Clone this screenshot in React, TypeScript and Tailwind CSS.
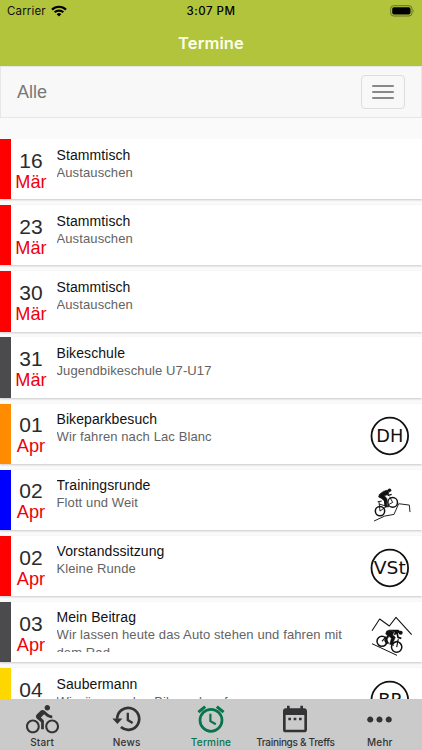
import { MdDirectionsBike, MdDateRange, MdMoreHoriz } from "react-icons/md";
import type { ReactNode } from "react";

function Badge({ text, w }: { text: string; w: number }) {
  return (
    <svg width="40" height="40" viewBox="0 0 40 40">
      <circle cx="19.8" cy="20" r="18.3" fill="none" stroke="#111" strokeWidth="1.8" />
      <text x="19.8" y="26.2" textAnchor="middle" textLength={w} lengthAdjust="spacingAndGlyphs" fontFamily="DejaVu Sans, sans-serif" fontSize="17.5" fill="#111">
        {text}
      </text>
    </svg>
  );
}

function Uphill() {
  return (
    <svg className="overflow-visible" width="40" height="40" viewBox="0 0 40 40" fill="none" stroke="#111" strokeLinejoin="round">
      <g transform="translate(-6 -2.6) scale(.3333)">
        <circle cx="48" cy="95" r="14" strokeWidth="4.5" />
        <circle cx="86" cy="69" r="14.5" strokeWidth="4.5" />
        <path d="M30 125 62 110 90 105 104 73 136 77 138 98" strokeWidth="2.8" />
        <path d="M48 95 45 67M41 67 53 65M46 74 66 80 86 69 77 52M48 95 66 82" strokeWidth="2.8" />
        <path d="M44 53 46 45 58 36 70 32 75 40 70 46 61 49 69 58 68 80 75 82 64 83 62 63 53 57Z" fill="#111" strokeWidth="2" />
        <path d="M52 53 62 64 64 80" strokeWidth="4.5" />
        <path d="M69 38 73 48 83 45" strokeWidth="4" />
        <circle cx="76.5" cy="32.5" r="5.3" fill="#111" stroke="none" />
      </g>
    </svg>
  );
}

function Downhill() {
  return (
    <svg className="overflow-visible" width="42" height="40" viewBox="0 0 42 40" fill="none" stroke="#111" strokeLinejoin="round">
      <g transform="translate(-6 -4.3) scale(.3333)">
        <path d="M24 63 47 28 76 49 96 23 143 75" strokeWidth="3.2" />
        <path d="M24 102 99 137" strokeWidth="3" />
        <circle cx="54" cy="95" r="15" strokeWidth="4.5" />
        <circle cx="98" cy="112" r="15.5" strokeWidth="4.5" />
        <path d="M54 95 66 81M98 112 103 88M103 92 85 103" strokeWidth="3.4" />
        <path d="M65 72 68 64 77 61 90 67 86 76 94 83 85 104 90 107 77 104 82 86 75 80 68 91 75 101 66 103 61 91 70 78Z" fill="#111" strokeWidth="1.5" />
        <path d="M79 61 104 61 108 67 97 73 90 76 93 68Z" fill="#111" strokeWidth="1.5" />
        <path d="M99 67 102 83 112 86" strokeWidth="5" />
        <circle cx="110" cy="69" r="6" fill="#111" stroke="none" />
      </g>
    </svg>
  );
}

function HistoryIcon() {
  return (
    <svg width="32" height="32" viewBox="0 0 32 32" fill="none" stroke="currentColor" strokeWidth="2.7">
      <path d="M6.2 15.8A11 11 0 1 1 9.9 24.1" />
      <path d="M1.4 15.6h10L6.4 21Z" fill="currentColor" stroke="none" />
      <path d="M16.8 9.8V17L21.6 20" strokeWidth="2.3" />
    </svg>
  );
}

function AlarmIcon() {
  return (
    <svg width="32" height="32" viewBox="0 0 32 32" fill="none" stroke="currentColor" strokeWidth="2.7">
      <circle cx="16" cy="17.3" r="11" />
      <path d="M3.4 9.2 10.2 3.6M21.8 3.6 28.6 9.2" strokeWidth="3" />
      <path d="M15.4 10.8V18.1L20.8 21.2" strokeWidth="2.2" />
    </svg>
  );
}

type Item = { color: string; day: string; month: string; title: string; sub: string; icon?: ReactNode };

const items: Item[] = [
  { color: "bg-[#ff0000]", day: "16", month: "Mär", title: "Stammtisch", sub: "Austauschen" },
  { color: "bg-[#ff0000]", day: "23", month: "Mär", title: "Stammtisch", sub: "Austauschen" },
  { color: "bg-[#ff0000]", day: "30", month: "Mär", title: "Stammtisch", sub: "Austauschen" },
  { color: "bg-[#4b4b4d]", day: "31", month: "Mär", title: "Bikeschule", sub: "Jugendbikeschule U7-U17" },
  { color: "bg-[#ff8c00]", day: "01", month: "Apr", title: "Bikeparkbesuch", sub: "Wir fahren nach Lac Blanc", icon: <Badge text="DH" w={27} /> },
  { color: "bg-[#0000ff]", day: "02", month: "Apr", title: "Trainingsrunde", sub: "Flott und Weit", icon: <Uphill /> },
  { color: "bg-[#ff0000]", day: "02", month: "Apr", title: "Vorstandssitzung", sub: "Kleine Runde", icon: <Badge text="VSt" w={32} /> },
  { color: "bg-[#4b4b4d]", day: "03", month: "Apr", title: "Mein Beitrag", sub: "Wir lassen heute das Auto stehen und fahren mit dem Rad", icon: <Downhill /> },
  { color: "bg-[#ffd700]", day: "04", month: "Apr", title: "Saubermann", sub: "Wir räumen den Bikepark auf", icon: <Badge text="BP" w={23} /> },
];

function Row({ item }: { item: Item }) {
  return (
    <div className="mb-[5.9px] flex h-[60.25px] shrink-0 bg-white shadow-[0_1px_2px_rgba(0,0,0,0.2)]">
      <div className={`w-[10.5px] shrink-0 ${item.color}`} />
      <div className="w-[41px] shrink-0 pt-[9.7px] text-center">
        <div className="text-[21px] leading-[23px] text-[#2b2b2b]">{item.day}</div>
        <div className="text-[18.2px] leading-[20px] text-[#ee000b]">{item.month}</div>
      </div>
      <div className="ml-[5px] mt-[6.5px] h-[43.5px] w-[295px] shrink-0 overflow-hidden">
        <div className="text-[14px] leading-[18px] tracking-[0.08px] text-[#111]">{item.title}</div>
        <div className="text-[13px] leading-[17.5px] tracking-[0.11px] text-[#636363]">{item.sub}</div>
      </div>
      <div className="ml-[18.5px] mt-[12.3px] w-[42px] shrink-0">{item.icon}</div>
    </div>
  );
}

function Tab({ icon, label, active = false, tight = false }: { icon: ReactNode; label: string; active?: boolean; tight?: boolean }) {
  return (
    <div className={`flex flex-1 flex-col items-center ${active ? "text-[#08744c]" : "text-[#333335]"}`}>
      <div className="flex h-[36px] items-center pt-[4px]">{icon}</div>
      <div className={`whitespace-nowrap pt-[0.5px] text-[10px] font-medium leading-[13px] ${tight ? "tracking-[-0.3px]" : "tracking-[0.2px]"}`}>{label}</div>
    </div>
  );
}

export default function App() {
  return (
    <div className="flex h-[750px] w-[422px] flex-col overflow-hidden bg-[#fafafa] font-['Liberation_Sans',Arial,sans-serif]">
      <header className="h-[66px] shrink-0 bg-[#b1c43c] font-[Inter,sans-serif]">
        <div className="grid h-[23px] grid-cols-3 items-center px-[7px] text-[11.5px] text-[#111]">
          <div className="flex items-center gap-[5px] tracking-[0.15px]">
            Carrier
            <svg className="-mt-px" width="16" height="12" viewBox="0 0 16 12" fill="none" stroke="black" strokeWidth="2.2">
              <path d="M1 4.6a10 10 0 0 1 14 0M3.7 7.3a6.1 6.1 0 0 1 8.6 0" />
              <path d="M8 11.5 5.7 9.2a3.3 3.3 0 0 1 4.6 0Z" fill="black" stroke="none" />
            </svg>
          </div>
          <div className="text-center font-medium tracking-[0.5px] text-black">3:07 PM</div>
          <div className="-mt-px flex justify-end">
            <svg width="25" height="12" viewBox="0 0 25 12">
              <rect x=".7" y=".7" width="21.3" height="10.3" rx="3" fill="none" stroke="#65702a" />
              <rect x="2.2" y="2.2" width="18.3" height="7.3" rx="1.7" fill="black" />
              <path d="M23.3 4.2q1.4 1.7 0 3.4Z" fill="#65702a" />
            </svg>
          </div>
        </div>
        <h1 className="pt-[9px] text-center text-[16.5px] font-semibold leading-[22px] tracking-[0.1px] text-[#fdfee9]">Termine</h1>
      </header>
      <div className="mb-[21px] flex h-[52px] shrink-0 items-center justify-between border border-[#e7e7e7] bg-[#f8f8f8] pl-[16px] pr-[16px]">
        <span className="text-[18px] text-[#777]">Alle</span>
        <button className="flex h-[34px] w-[44px] flex-col items-center justify-center gap-[4px] rounded-[4px] border border-[#ddd]">
          <span className="h-[2px] w-[22px] rounded-full bg-[#888]" />
          <span className="h-[2px] w-[22px] rounded-full bg-[#888]" />
          <span className="h-[2px] w-[22px] rounded-full bg-[#888]" />
        </button>
      </div>
      <main className="flex min-h-0 flex-1 flex-col overflow-hidden">
        {items.map((item, i) => (
          <Row key={i} item={item} />
        ))}
      </main>
      <nav className="z-10 flex h-[51px] shrink-0 bg-[#cacaca] font-[Inter,sans-serif]">
        <Tab icon={<MdDirectionsBike size={33} />} label="Start" />
        <Tab icon={<HistoryIcon />} label="News" />
        <Tab icon={<AlarmIcon />} label="Termine" active />
        <Tab icon={<MdDateRange size={32} />} label="Trainings & Treffs" tight />
        <Tab icon={<MdMoreHoriz size={37} />} label="Mehr" />
      </nav>
    </div>
  );
}
